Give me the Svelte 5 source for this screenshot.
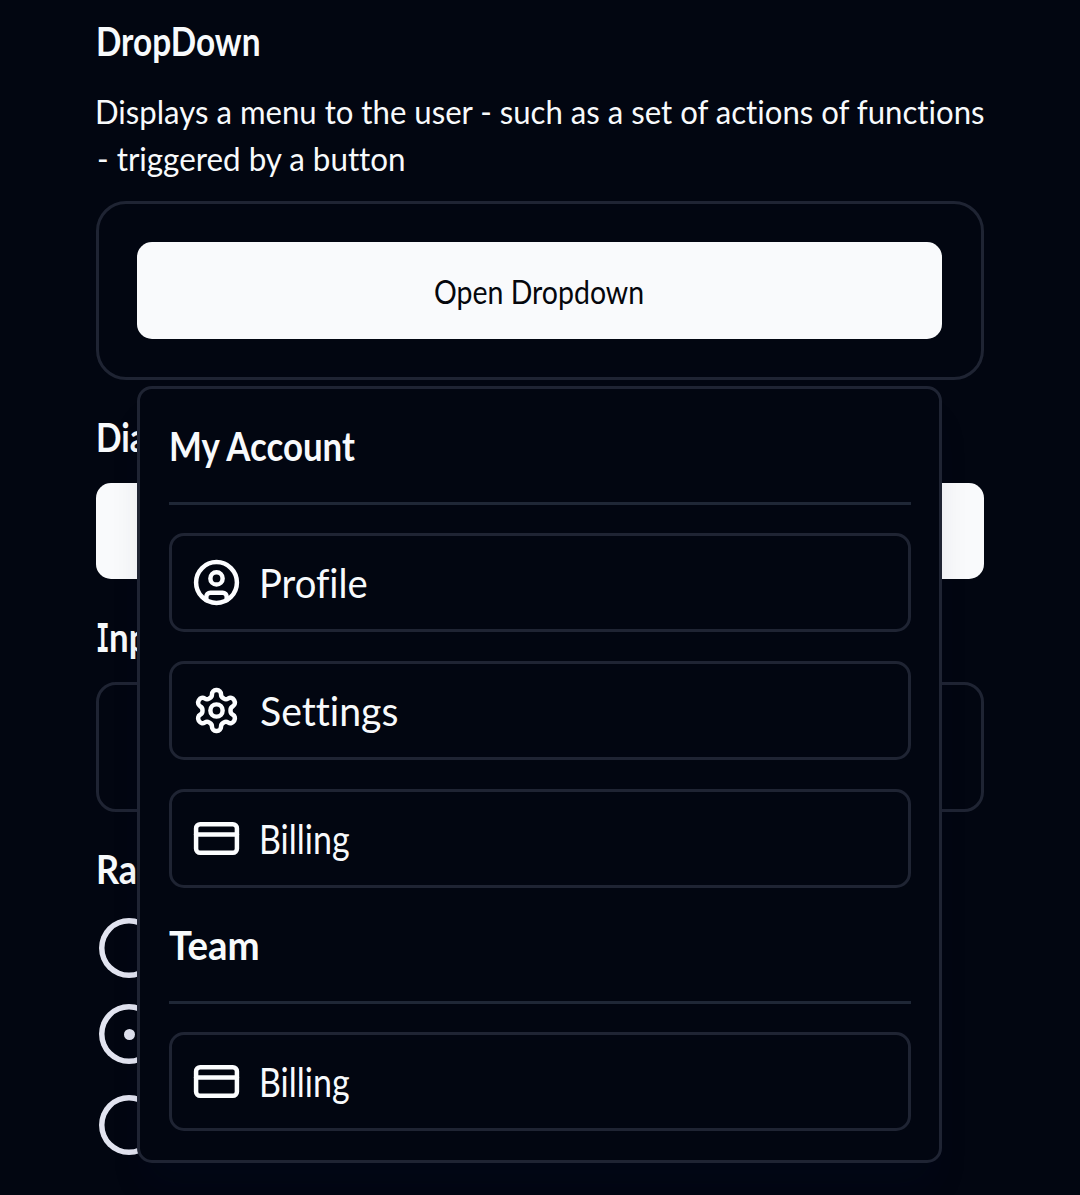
<script>
  const account = [
    { icon: 'user', label: 'Profile' },
    { icon: 'settings', label: 'Settings' },
    { icon: 'card', label: 'Billing' }
  ];
  const team = [{ icon: 'card', label: 'Billing' }];
</script>

{#snippet item(entry)}
  <button class="item">
    <svg class="icon" viewBox="0 0 24 24">
      {#if entry.icon === 'user'}
        <circle cx="12" cy="12" r="10" />
        <circle cx="12" cy="10" r="3" />
        <path d="M7 20.662V19a2 2 0 0 1 2-2h6a2 2 0 0 1 2 2v1.662" />
      {:else if entry.icon === 'settings'}
        <path d="M12.22 2h-.44a2 2 0 0 0-2 2v.18a2 2 0 0 1-1 1.73l-.43.25a2 2 0 0 1-2 0l-.15-.08a2 2 0 0 0-2.73.73l-.22.38a2 2 0 0 0 .73 2.73l.15.1a2 2 0 0 1 1 1.72v.51a2 2 0 0 1-1 1.74l-.15.09a2 2 0 0 0-.73 2.73l.22.38a2 2 0 0 0 2.73.73l.15-.08a2 2 0 0 1 2 0l.43.25a2 2 0 0 1 1 1.73V20a2 2 0 0 0 2 2h.44a2 2 0 0 0 2-2v-.18a2 2 0 0 1 1-1.73l.43-.25a2 2 0 0 1 2 0l.15.08a2 2 0 0 0 2.73-.73l.22-.39a2 2 0 0 0-.73-2.73l-.15-.08a2 2 0 0 1-1-1.74v-.5a2 2 0 0 1 1-1.74l.15-.09a2 2 0 0 0 .73-2.73l-.22-.38a2 2 0 0 0-2.73-.73l-.15.08a2 2 0 0 1-2 0l-.43-.25a2 2 0 0 1-1-1.73V4a2 2 0 0 0-2-2z" />
        <circle cx="12" cy="12" r="3" />
      {:else}
        <rect x="2" y="5" width="20" height="14" rx="2" />
        <path d="M2 10h20" />
      {/if}
    </svg>
    <span class="label {entry.label.toLowerCase()}">{entry.label}</span>
  </button>
{/snippet}

<main>
  <h2 class="t-drop">DropDown</h2>
  <p><span class="line1">Displays a menu to the user - such as a set of actions of functions</span><br /><span class="line2">- triggered by a button</span></p>

  <section class="frame">
    <button class="primary"><span class="open">Open Dropdown</span></button>
    <div class="menu">
      <h3 class="t-account">My Account</h3>
      <hr />
      <div class="items">
        {#each account as entry}{@render item(entry)}{/each}
      </div>
      <h3 class="t-team">Team</h3>
      <hr />
      <div class="items">
        {#each team as entry}{@render item(entry)}{/each}
      </div>
    </div>
  </section>

  <h2 class="t-dialog">Dia</h2>
  <button class="primary wide" aria-label="Open dialog"></button>

  <h2 class="t-input"><span class="slab">I</span>np</h2>
  <div class="field"></div>

  <h2 class="t-radio">Ra</h2>
  <div class="radios">
    <span class="radio"></span>
    <span class="radio on"></span>
    <span class="radio last"></span>
  </div>
</main>

<style>
  :global(body) {
    background: #020611;
    overflow: hidden;
  }
  main {
    box-sizing: border-box;
    width: 1080px;
    height: 1195px;
    overflow: hidden;
    padding: 17px 96px 0;
    color: #f8fafc;
    font-family: Lato, sans-serif;
    font-variant-ligatures: none;
    display: flex;
    flex-direction: column;
  }
  h2, h3, p { margin: 0; }
  h2, h3 {
    width: max-content;
    font-size: 40px;
    line-height: 48px;
    font-weight: 700;
    white-space: nowrap;
    transform-origin: 0 50%;
    transform: scaleX(0.87);
  }
  .t-drop { transform: scaleX(0.835); }
  p {
    margin-top: 23px;
    font-size: 32px;
    line-height: 47px;
    white-space: nowrap;
  }
  p span {
    display: inline-block;
    transform-origin: 0 50%;
  }
  .line1 { transform: translateX(-1px) scaleX(0.973); }
  .line2 { transform: translateX(1px) scaleX(0.98); }
  .frame {
    position: relative;
    box-sizing: border-box;
    height: 179px;
    margin-top: 19px;
    padding: 38px 39px 38px 38px;
    border: 3px solid #1f2433;
    border-radius: 30px;
  }
  button {
    display: flex;
    align-items: center;
    box-sizing: border-box;
    width: 100%;
    border: 0;
    font: inherit;
    color: inherit;
  }
  .primary {
    justify-content: center;
    flex: none;
    height: 97px;
    border-radius: 15px;
    background: #f9fafc;
    color: #05070c;
    font-size: 32px;
  }
  .open {
    padding-top: 2px;
    transform: scaleX(0.89);
  }
  .t-dialog { margin-top: 33px; transform: scaleX(0.84); }
  .wide { height: 96px; margin-top: 22px; }
  .t-input { margin-top: 34px; }
  .slab {
    display: inline-block;
    width: 15px;
    font-family: 'DejaVu Sans Mono', monospace;
    font-size: 39px;
    line-height: 40px;
    transform-origin: 0 50%;
    transform: scaleX(0.66);
  }
  .field {
    box-sizing: border-box;
    flex: none;
    height: 130px;
    margin-top: 21px;
    border: 3px solid #1f2433;
    border-radius: 20px;
  }
  .t-radio { margin-top: 33px; transform: scaleX(0.9); }
  .radios {
    display: flex;
    flex-direction: column;
    gap: 26px;
    padding: 25px 0 0 3px;
  }
  .radio {
    display: grid;
    place-items: center;
    width: 60px;
    height: 60px;
    box-shadow: inset 0 0 0 5.5px #e2e4f0;
    border-radius: 50%;
  }
  .radio.last { margin-top: 5px; }
  .radio.on::after {
    content: '';
    width: 11px;
    height: 11px;
    border-radius: 50%;
    background: #e2e4f0;
  }
  .menu {
    position: absolute;
    z-index: 2;
    top: 182px;
    left: 38px;
    right: 39px;
    box-sizing: border-box;
    height: 777px;
    padding: 33px 28px 29px 29px;
    border: 3px solid #1f2433;
    border-radius: 15px;
    background: #020611;
    box-shadow: 0 30px 36px -9px rgba(10, 15, 60, 0.12);
  }
  hr {
    height: 3px;
    margin: 32px 0 28px;
    border: 0;
    background: #1f2736;
  }
  .items {
    display: flex;
    flex-direction: column;
    gap: 29px;
  }
  .item {
    height: 99px;
    gap: 20px;
    padding: 0 20px 1px;
    border: 3px solid #1f2433;
    border-radius: 15px;
    background: none;
    font-size: 40px;
  }
  .icon {
    width: 49px;
    height: 49px;
    margin: 0 -0.5px;
    fill: none;
    stroke: #fcfdff;
    stroke-width: 2.2;
    stroke-linecap: round;
    stroke-linejoin: round;
  }
  .label {
    transform-origin: 0 50%;
    padding-top: 2px;
  }
  .profile { transform: translateX(-1px) scaleX(0.955); }
  .settings { transform: scaleX(0.98); }
  .billing { transform: translateX(-1px) scaleX(0.85); }
  .t-team { margin-top: 33px; transform: scaleX(0.96); }
</style>
